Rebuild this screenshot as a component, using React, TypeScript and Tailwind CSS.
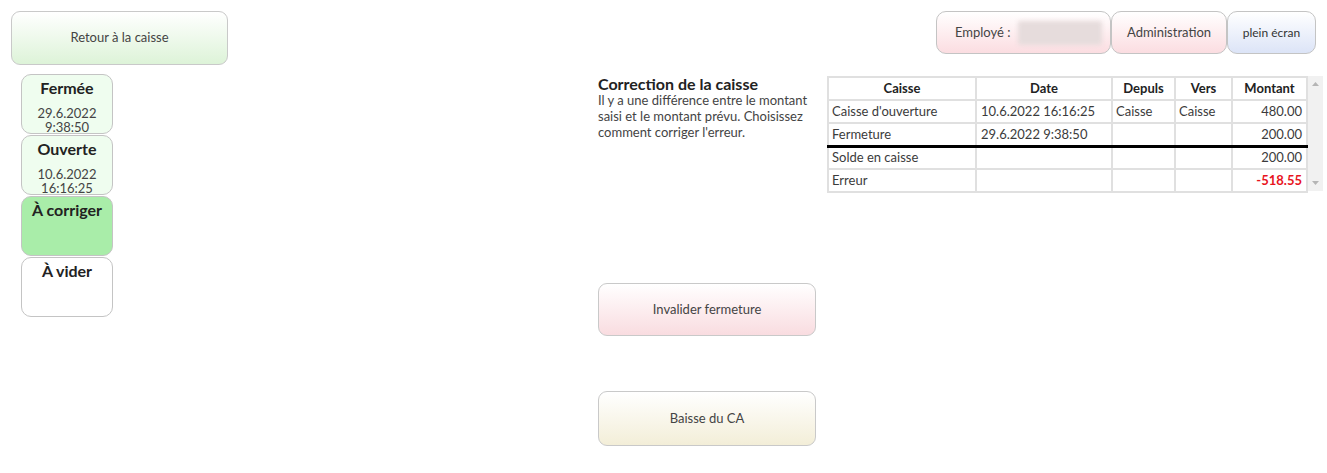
import React from "react";

const font = { fontFamily: "Lato, 'Noto Sans', sans-serif" };

const statusCards = [
  { title: "Fermée", lines: ["29.6.2022", "9:38:50"], bg: "bg-[#effdef]" },
  { title: "Ouverte", lines: ["10.6.2022", "16:16:25"], bg: "bg-[#effdef]" },
  { title: "À corriger", lines: [], bg: "bg-[#a9eda9]" },
  { title: "À vider", lines: [], bg: "bg-white" },
];

const rows = [
  { caisse: "Caisse d'ouverture", date: "10.6.2022 16:16:25", depuis: "Caisse", vers: "Caisse", montant: "480.00" },
  { caisse: "Fermeture", date: "29.6.2022 9:38:50", depuis: "", vers: "", montant: "200.00", thick: true },
  { caisse: "Solde en caisse", date: "", depuis: "", vers: "", montant: "200.00" },
  { caisse: "Erreur", date: "", depuis: "", vers: "", montant: "-518.55", error: true },
];

const App = () => {
  return (
    <div className="flex w-full h-[473px] bg-white text-[#3b3b3b] overflow-hidden" style={font}>
      {/* Left: back button + status list */}
      <div className="w-[598px] shrink-0 pl-[11px] pt-[11px]">
        <button className="w-[217px] h-[54px] rounded-[9px] border border-[#c9c9c9] bg-gradient-to-b from-white to-[#ddf3d8] text-[13px] text-[#444]">
          Retour à la caisse
        </button>
        <div className="ml-[10px] mt-[9px] flex flex-col gap-px w-[92px]">
          {statusCards.map((c) => (
            <div
              key={c.title}
              className={`h-[60px] rounded-[10px] border border-[#c4c4c4] ${c.bg} flex flex-col items-center pt-[3px]`}
            >
              <div className="text-[16px] font-bold text-[#222] leading-[20px]">{c.title}</div>
              <div className="mt-[8px] text-[13px] leading-[14px] text-[#444] text-center">
                {c.lines.map((l) => (
                  <div key={l}>{l}</div>
                ))}
              </div>
            </div>
          ))}
        </div>
      </div>

      {/* Right: header + correction content */}
      <div className="flex-1 flex flex-col">
        <div className="flex justify-end pt-[11px] pr-[11px]">
          <button className="w-[175px] h-[43px] rounded-[10px] border border-[#c4c4c4] bg-gradient-to-b from-white to-[#fbdde1] flex items-center pl-[18px] text-[13px] text-[#444]">
            <span>Employé :</span>
            <span className="ml-[7px] w-[84px] h-[24px] bg-[#e6dcdc] blur-[2px] rounded-[2px]" />
          </button>
          <button className="w-[116px] h-[43px] rounded-[10px] border border-[#c4c4c4] bg-gradient-to-b from-white to-[#fbdde1] text-[13px] text-[#444]">
            Administration
          </button>
          <button className="w-[89px] h-[43px] rounded-[10px] border border-[#c4c4c4] bg-gradient-to-b from-white to-[#dce4f7] text-[12px] text-[#333]">
            plein écran
          </button>
        </div>

        <div className="mt-[22px] flex h-[115px]">
          <div className="w-[229px] shrink-0 -mt-[1px]">
            <div className="text-[16px] font-bold text-[#222] leading-[17px]">Correction de la caisse</div>
            <p className="text-[13px] leading-[16px] text-[#444] pr-[6px]">
              Il y a une différence entre le montant saisi et le montant prévu. Choisissez comment corriger l'erreur.
            </p>
          </div>

          <div className="flex items-start">
            <table className="border-collapse text-[13px] text-[#3b3b3b]">
              <thead>
                <tr className="h-[23px]">
                  <th className="w-[148px] border-2 border-[#e0e0e0] font-bold text-[#222]">Caisse</th>
                  <th className="w-[136px] border-2 border-[#e0e0e0] font-bold text-[#222]">Date</th>
                  <th className="w-[63px] border-2 border-[#e0e0e0] font-bold text-[#222]">Depuls</th>
                  <th className="w-[57px] border-2 border-[#e0e0e0] font-bold text-[#222]">Vers</th>
                  <th className="w-[75px] border-2 border-[#e0e0e0] font-bold text-[#222]">Montant</th>
                </tr>
              </thead>
              <tbody>
                {rows.map((r) => {
                  const b = r.thick
                    ? "border-2 border-[#e0e0e0] border-b-[3px] border-b-black"
                    : "border-2 border-[#e0e0e0]";
                  return (
                    <tr key={r.caisse} className="h-[23px]">
                      <td className={`${b} px-[3px] text-left`}>{r.caisse}</td>
                      <td className={`${b} px-[4px] text-left`}>{r.date}</td>
                      <td className={`${b} px-[3px] text-left`}>{r.depuis}</td>
                      <td className={`${b} px-[3px] text-left`}>{r.vers}</td>
                      <td
                        className={`${b} pr-[4px] text-right ${r.error ? "text-[#e8141e] font-bold" : ""}`}
                      >
                        {r.montant}
                      </td>
                    </tr>
                  );
                })}
              </tbody>
            </table>
            {/* scrollbar */}
            <div className="w-[15px] h-[115px] bg-[#f1f1f1] flex flex-col items-center justify-between py-[6px]">
              <svg width="7" height="4" viewBox="0 0 7 4">
                <polygon points="0,4 7,4 3.5,0" fill="#b5b5b5" />
              </svg>
              <svg width="7" height="4" viewBox="0 0 7 4">
                <polygon points="0,0 7,0 3.5,4" fill="#b5b5b5" />
              </svg>
            </div>
          </div>
        </div>

        <div className="mt-[92px] flex flex-col gap-[55px]">
          <button className="w-[218px] h-[53px] rounded-[9px] border border-[#c9c9c9] bg-gradient-to-b from-white to-[#f9dce0] text-[13px] text-[#444]">
            Invalider fermeture
          </button>
          <button className="w-[218px] h-[55px] rounded-[9px] border border-[#c9c9c9] bg-gradient-to-b from-white to-[#f3eed8] text-[13px] text-[#444]">
            Baisse du CA
          </button>
        </div>
      </div>
    </div>
  );
};

export default App;
